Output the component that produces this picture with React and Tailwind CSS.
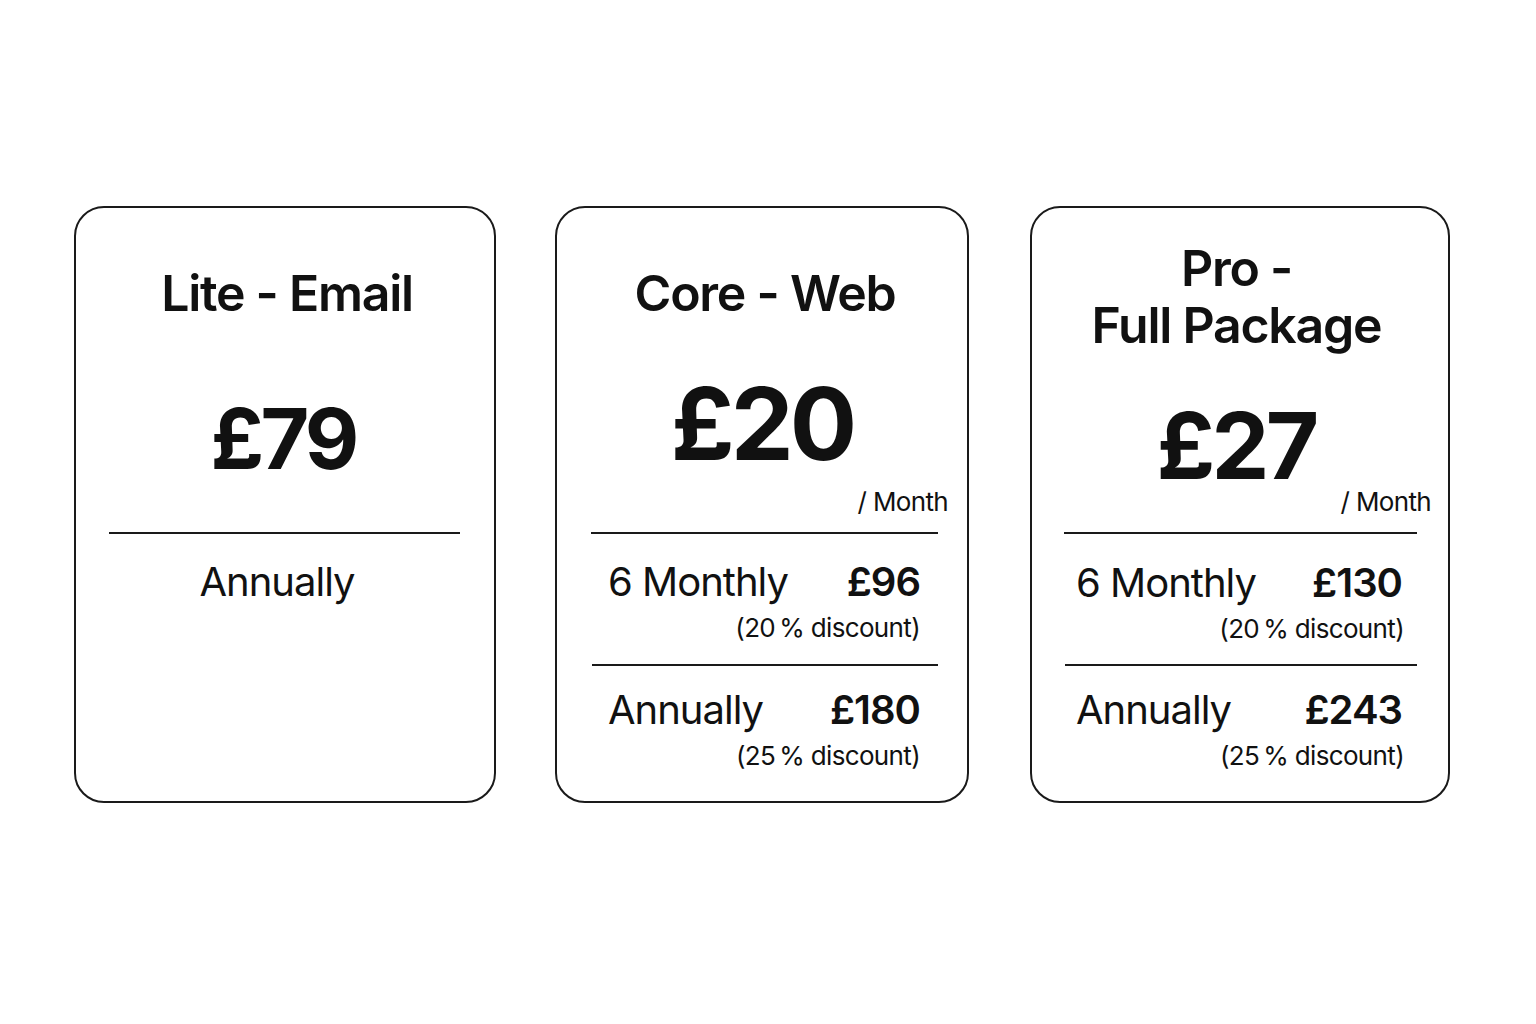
import React from 'react';

const font = { fontFamily: 'Inter, "Liberation Sans", sans-serif' };

function Divider({ className }) {
  return <div className={`h-[2px] bg-[#1a1a1a] ${className}`} />;
}

function PriceRow({ label, price, discount, className, pad, discountPad = '' }) {
  return (
    <div className={`flex flex-col ${pad} ${className}`}>
      <div className="flex items-baseline justify-between">
        <span className="text-[40px] leading-none tracking-tight">{label}</span>
        <span className="text-[40px] leading-none font-semibold tracking-tight">{price}</span>
      </div>
      <div className={`mt-[13px] text-right text-[26px] leading-none tracking-tight ${discountPad}`}>{discount}</div>
    </div>
  );
}

export default function App() {
  return (
    <div className="w-[1536px] h-[1024px] bg-white text-[#111]" style={font}>
      <div className="flex items-start pt-[206px] pl-[74px]">
        {/* Lite */}
        <div className="w-[422px] h-[597px] border-2 border-[#1a1a1a] rounded-[30px] flex flex-col">
          <div className="h-[324px] flex flex-col items-center">
            <h2 className="mt-[60px] ml-[4px] text-[50px] leading-none font-semibold tracking-tight">Lite - Email</h2>
            <div className="mt-[79px] mr-[4px] text-[84px] leading-none font-bold tracking-[-0.045em]">£79</div>
          </div>
          <Divider className="ml-[33px] mr-[34px]" />
          <div className="mt-[28px] pr-[16px] text-center text-[40px] leading-none tracking-tight">Annually</div>
        </div>

        {/* Core */}
        <div className="ml-[59px] w-[414px] h-[597px] border-2 border-[#1a1a1a] rounded-[30px] flex flex-col">
          <div className="h-[324px] flex flex-col">
            <h2 className="mt-[60px] pl-[6px] text-center text-[50px] leading-none font-semibold tracking-tight">Core - Web</h2>
            <div className="mt-[56px] text-center text-[100px] leading-none font-bold tracking-[-0.04em]">£20</div>
            <div className="mt-[15px] pr-[19px] text-right text-[26px] leading-none tracking-tight">/ Month</div>
          </div>
          <Divider className="ml-[34px] mr-[29px]" />
          <PriceRow label="6 Monthly" price="£96" discount={'(20\u2009% discount)'} className="mt-[28px]" pad="pl-[51px] pr-[47px]" />
          <Divider className="mt-[23px] ml-[35px] mr-[29px]" />
          <PriceRow label="Annually" price="£180" discount={'(25\u2009% discount)'} className="mt-[24px]" pad="pl-[51px] pr-[47px]" />
        </div>

        {/* Pro */}
        <div className="ml-[61px] w-[420px] h-[597px] border-2 border-[#1a1a1a] rounded-[30px] flex flex-col">
          <div className="h-[324px] flex flex-col">
            <h2 className="mt-[32px] pr-[7px] text-center text-[50px] leading-[57px] font-semibold tracking-tight">
              Pro -<br />Full Package
            </h2>
            <div className="mt-[46px] pr-[8px] text-center text-[92px] leading-none font-bold tracking-[-0.04em]">£27</div>
            <div className="-mt-[3px] pr-[17px] text-right text-[26px] leading-none tracking-tight">/ Month</div>
          </div>
          <Divider className="ml-[32px] mr-[31px]" />
          <PriceRow label="6 Monthly" price="£130" discount={'(20\u2009% discount)'} className="mt-[29px]" pad="pl-[44px] pr-[46px]" discountPad="-mr-[2px]" />
          <Divider className="mt-[22px] ml-[33px] mr-[31px]" />
          <PriceRow label="Annually" price="£243" discount={'(25\u2009% discount)'} className="mt-[24px]" pad="pl-[44px] pr-[46px]" discountPad="-mr-[2px]" />
        </div>
      </div>
    </div>
  );
}
